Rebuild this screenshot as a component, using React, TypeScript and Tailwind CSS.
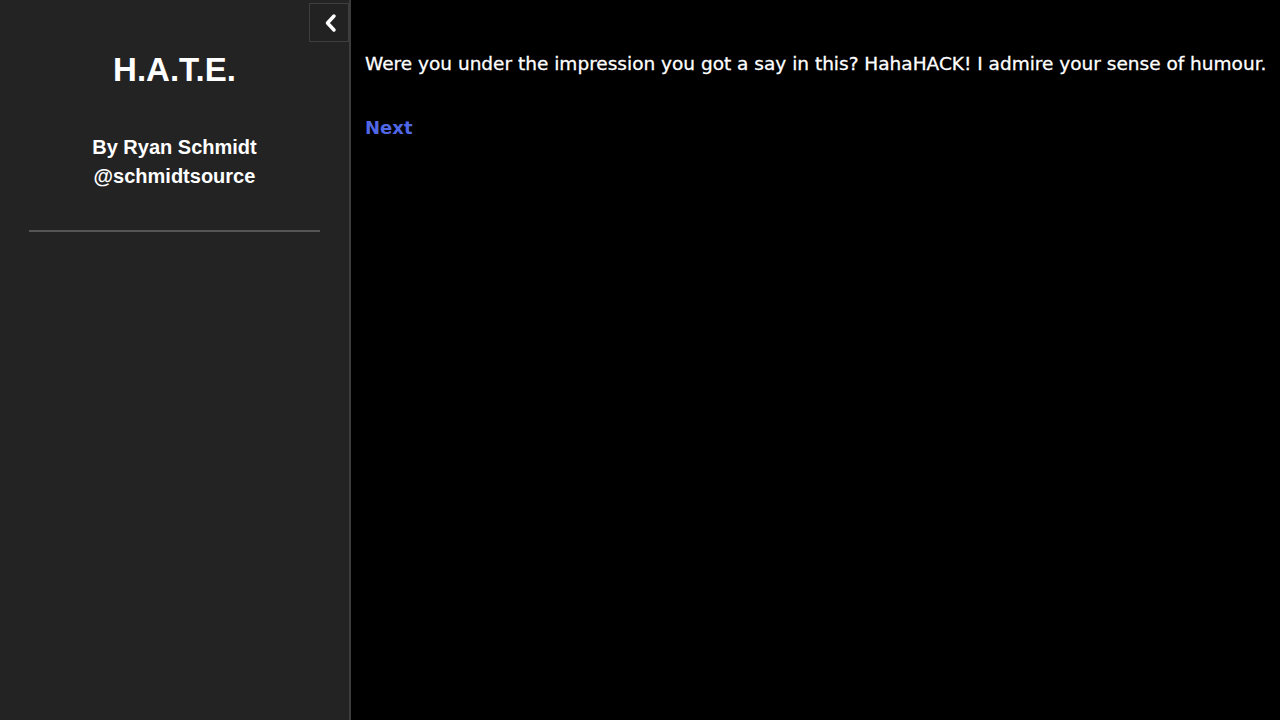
import React from "react";

export default function App() {
  return (
    <div className="flex h-[720px] w-[1280px] overflow-hidden bg-black">
      <aside className="relative flex w-[351px] shrink-0 flex-col items-center border-r-2 border-[#3c3c3c] bg-[#232323] font-['Liberation_Sans',Arial,sans-serif]">
        <button className="absolute right-[0px] top-[3px] flex h-[39px] w-[40px] items-center justify-center border border-[#3e3e3e] bg-[#222] pl-[4px]">
          <svg width="16" height="20" viewBox="0 0 16 20">
            <path d="M11 3 L4.5 10 L11 17" fill="none" stroke="#fff" strokeWidth="3.5" strokeLinecap="round" strokeLinejoin="round" />
          </svg>
        </button>
        <h1 className="mt-[53px] text-[33px] font-bold leading-[34px] text-white">H.A.T.E.</h1>
        <div className="mt-[46px] text-center text-[20px] font-bold leading-[29px] text-white">
          <div>By Ryan Schmidt</div>
          <div>@schmidtsource</div>
        </div>
        <div className="mt-[39px] h-[2px] w-[291px] bg-[#555]" />
      </aside>
      <main className="flex-1 pl-[14px] pt-[52px] font-['DejaVu_Sans',Verdana,sans-serif] text-white">
        <p className="text-[18.5px] leading-[24px] [-webkit-text-stroke:0.3px_white]">
          Were you under the impression you got a say in this? HahaHACK! I admire your sense of humour.
        </p>
        <a href="#" className="mt-[40px] block text-[18px] font-bold leading-[24px] text-[#5067e6]">Next</a>
      </main>
    </div>
  );
}
